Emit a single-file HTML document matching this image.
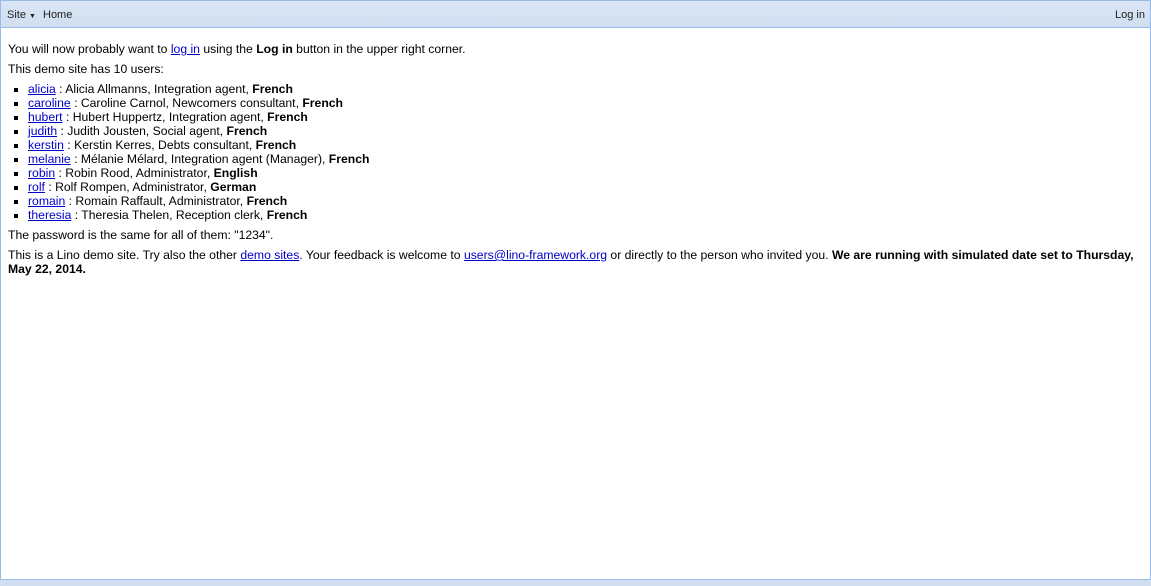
<!DOCTYPE html>
<html><head><style>
html,body{margin:0;padding:0;}
body{width:1151px;height:586px;position:relative;overflow:hidden;font-family:"Liberation Sans",Arial,sans-serif;font-size:12.2px;color:#000;background:#fff;}
.frame{position:absolute;left:0;top:0;width:1149px;height:584px;border:1px solid #99bbe8;}
.tb{position:absolute;left:1px;top:1px;width:1149px;height:26px;background:linear-gradient(#dae6f4,#d0def0);border-bottom:1px solid #99bbe8;}
.tb span{position:absolute;top:8px;color:#222;font-size:11px;}
.bb{position:absolute;left:0;top:579px;width:1151px;height:7px;background:#d0def0;border-top:1px solid #99bbe8;box-sizing:border-box;}
.c{position:absolute;left:8px;top:42px;width:1130px;line-height:14px;}
p{margin:0 0 6px 0;}
ul{margin:0 0 6px 0;padding-left:20px;list-style:square;}
a{color:#00c;}
</style></head><body>
<div class="frame"></div>
<div class="tb"><span style="left:6px">Site <span style="position:static;font-size:7px">▼</span></span><span style="left:42px">Home</span><span style="left:1114px">Log in</span></div>
<div class="c">
<p>You will now probably want to <a href="#">log in</a> using the <b>Log in</b> button in the upper right corner.</p>
<p>This demo site has 10 users:</p>
<ul>
<li><a href="#">alicia</a> : Alicia Allmanns, Integration agent, <b>French</b></li>
<li><a href="#">caroline</a> : Caroline Carnol, Newcomers consultant, <b>French</b></li>
<li><a href="#">hubert</a> : Hubert Huppertz, Integration agent, <b>French</b></li>
<li><a href="#">judith</a> : Judith Jousten, Social agent, <b>French</b></li>
<li><a href="#">kerstin</a> : Kerstin Kerres, Debts consultant, <b>French</b></li>
<li><a href="#">melanie</a> : Mélanie Mélard, Integration agent (Manager), <b>French</b></li>
<li><a href="#">robin</a> : Robin Rood, Administrator, <b>English</b></li>
<li><a href="#">rolf</a> : Rolf Rompen, Administrator, <b>German</b></li>
<li><a href="#">romain</a> : Romain Raffault, Administrator, <b>French</b></li>
<li><a href="#">theresia</a> : Theresia Thelen, Reception clerk, <b>French</b></li>
</ul>
<p>The password is the same for all of them: "1234".</p>
<p>This is a Lino demo site. Try also the other <a href="#">demo sites</a>. Your feedback is welcome to <a href="#">users@lino-framework.org</a> or directly to the person who invited you. <b>We are running with simulated date set to Thursday, May 22, 2014.</b></p>
</div>
<div class="bb"></div>
</body></html>
